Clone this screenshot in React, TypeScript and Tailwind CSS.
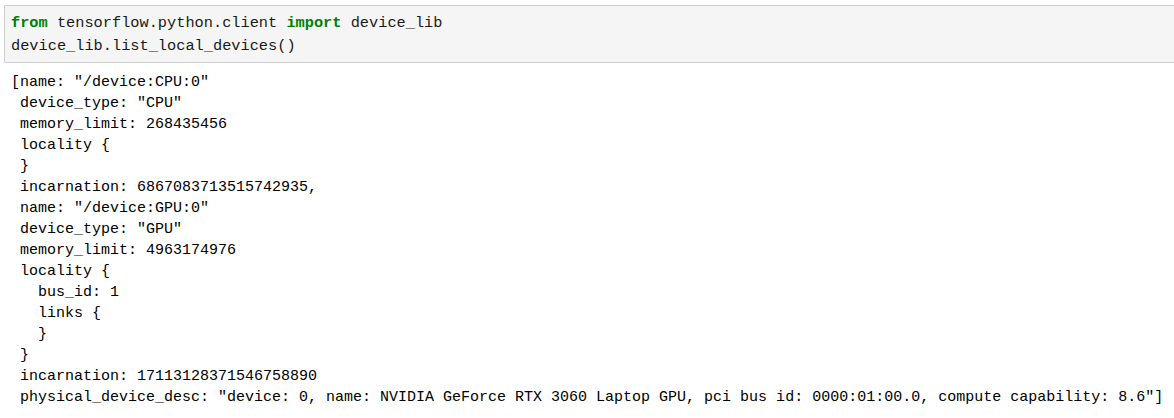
const outputLines = [
  '[name: "/device:CPU:0"',
  ' device_type: "CPU"',
  ' memory_limit: 268435456',
  ' locality {',
  ' }',
  ' incarnation: 6867083713515742935,',
  ' name: "/device:GPU:0"',
  ' device_type: "GPU"',
  ' memory_limit: 4963174976',
  ' locality {',
  '   bus_id: 1',
  '   links {',
  '   }',
  ' }',
  ' incarnation: 17113128371546758890',
  ' physical_device_desc: "device: 0, name: NVIDIA GeForce RTX 3060 Laptop GPU, pci bus id: 0000:01:00.0, compute capability: 8.6"]',
];

export default function App() {
  return (
    <div className="w-[1174px] h-[418px] overflow-hidden bg-white pt-[5px] pl-[4px] font-['Liberation_Mono',monospace] text-[#1a1a1a]">
      {/* input cell */}
      <div className="h-[58px] border border-r-0 border-[#cfcfcf] bg-[#f5f5f5] rounded-l-[2px] px-[6px] pt-[6px] text-[15.3px] leading-[22.5px] whitespace-pre">
        <div>
          <span className="font-bold text-[#008000]">from</span> tensorflow.python.client{" "}
          <span className="font-bold text-[#008000]">import</span> device_lib
        </div>
        <div>device_lib.list_local_devices()</div>
      </div>

      {/* output */}
      <div className="pl-[7px] pt-[9px] text-[15px] leading-[21px] whitespace-pre text-black">
        {outputLines.map((line, i) => (
          <div key={i}>{line}</div>
        ))}
      </div>
    </div>
  );
}
